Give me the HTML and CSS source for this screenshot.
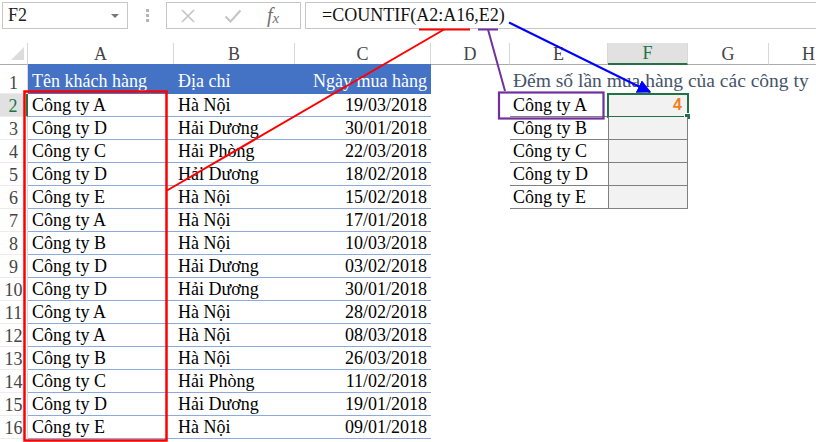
FILE: index.html
```html
<!DOCTYPE html>
<html lang="vi">
<head>
    <meta charset="UTF-8">
    <title>COUNTIF</title>
    <link rel="stylesheet" href="styles.css">
</head>
<body>
    <div class="formula-bar">
        <div class="name-box">F2<span class="caret"></span></div>
        <div class="grip"><span></span><span></span><span></span></div>
        <div class="fn-buttons">
            <svg class="btn-x" width="16" height="16" viewBox="0 0 16 16"><path d="M2 2L14 14M14 2L2 14" stroke="#c4c4c4" stroke-width="1.6" fill="none"/></svg>
            <svg class="btn-ok" width="18" height="16" viewBox="0 0 18 16"><path d="M1.5 8.5L6.5 13.5L16.5 2.5" stroke="#c4c4c4" stroke-width="2" fill="none"/></svg>
            <span class="fx">f<span>x</span></span>
        </div>
        <div class="formula">=COUNTIF(A2:A16,E2)</div>
    </div>

    <div class="sheet">
        <div class="row col-head">
            <div class="corner"><span class="tri"></span></div>
            <div>A</div><div>B</div><div>C</div><div>D</div><div>E</div><div class="sel">F</div><div>G</div><div>H</div>
        </div>
        <div class="row r1">
            <div class="rh">1</div>
            <div class="th">Tên khách hàng</div>
            <div class="th">Địa chỉ</div>
            <div class="th num">Ngày mua hàng</div>
            <div class="note">Đếm số lần mua hàng của các công ty</div>
        </div>
        <div class="row">
            <div class="rh sel">2</div>
            <div class="td">Công ty A</div><div class="td">Hà Nội</div><div class="td num">19/03/2018</div>
            <div class="ec">Công ty A</div><div class="fc active"><b>4</b></div>
        </div>
        <div class="row">
            <div class="rh">3</div>
            <div class="td">Công ty D</div><div class="td">Hải Dương</div><div class="td num">30/01/2018</div>
            <div class="ec">Công ty B</div><div class="fc"></div>
        </div>
        <div class="row">
            <div class="rh">4</div>
            <div class="td">Công ty C</div><div class="td">Hải Phòng</div><div class="td num">22/03/2018</div>
            <div class="ec">Công ty C</div><div class="fc"></div>
        </div>
        <div class="row">
            <div class="rh">5</div>
            <div class="td">Công ty D</div><div class="td">Hải Dương</div><div class="td num">18/02/2018</div>
            <div class="ec">Công ty D</div><div class="fc"></div>
        </div>
        <div class="row">
            <div class="rh">6</div>
            <div class="td">Công ty E</div><div class="td">Hà Nội</div><div class="td num">15/02/2018</div>
            <div class="ec">Công ty E</div><div class="fc"></div>
        </div>
        <div class="row">
            <div class="rh">7</div>
            <div class="td">Công ty A</div><div class="td">Hà Nội</div><div class="td num">17/01/2018</div>
        </div>
        <div class="row">
            <div class="rh">8</div>
            <div class="td">Công ty B</div><div class="td">Hà Nội</div><div class="td num">10/03/2018</div>
        </div>
        <div class="row">
            <div class="rh">9</div>
            <div class="td">Công ty D</div><div class="td">Hải Dương</div><div class="td num">03/02/2018</div>
        </div>
        <div class="row">
            <div class="rh">10</div>
            <div class="td">Công ty D</div><div class="td">Hải Dương</div><div class="td num">30/01/2018</div>
        </div>
        <div class="row">
            <div class="rh">11</div>
            <div class="td">Công ty A</div><div class="td">Hà Nội</div><div class="td num">28/02/2018</div>
        </div>
        <div class="row">
            <div class="rh">12</div>
            <div class="td">Công ty A</div><div class="td">Hà Nội</div><div class="td num">08/03/2018</div>
        </div>
        <div class="row">
            <div class="rh">13</div>
            <div class="td">Công ty B</div><div class="td">Hà Nội</div><div class="td num">26/03/2018</div>
        </div>
        <div class="row">
            <div class="rh">14</div>
            <div class="td">Công ty C</div><div class="td">Hải Phòng</div><div class="td num">11/02/2018</div>
        </div>
        <div class="row">
            <div class="rh">15</div>
            <div class="td">Công ty D</div><div class="td">Hải Dương</div><div class="td num">19/01/2018</div>
        </div>
        <div class="row">
            <div class="rh">16</div>
            <div class="td">Công ty E</div><div class="td">Hà Nội</div><div class="td num">09/01/2018</div>
        </div>
    </div>

    <!-- annotations drawn over the sheet -->
    <svg class="marks" width="816" height="442" viewBox="0 0 816 442">
        <defs>
            <marker id="arrow" viewBox="0 0 10 10" refX="9" refY="5" markerWidth="7" markerHeight="7" orient="auto">
                <path d="M0 0L10 5L0 10z" fill="#0000ff"/>
            </marker>
        </defs>
        <line x1="419" y1="29.5" x2="470" y2="29.5" stroke="#ff0000" stroke-width="2"/>
        <line x1="444" y1="29.5" x2="167" y2="190.5" stroke="#ff0000" stroke-width="2"/>
        <rect x="24.5" y="91.5" width="142" height="349" fill="none" stroke="#ff0000" stroke-width="2.5"/>
        <line x1="478" y1="29.5" x2="498" y2="29.5" stroke="#7030a0" stroke-width="2"/>
        <line x1="488" y1="29.5" x2="505" y2="91" stroke="#7030a0" stroke-width="2"/>
        <rect x="499" y="92.5" width="104.5" height="26" fill="none" stroke="#7030a0" stroke-width="2.2"/>
        <line x1="509" y1="22.5" x2="650" y2="92" stroke="#0000ff" stroke-width="2" marker-end="url(#arrow)"/>
    </svg>
</body>
</html>
```

FILE: styles.css
```css
body {
    margin: 0;
    width: 816px;
    height: 442px;
    overflow: hidden;
    position: relative;
    background-color: #fff;
    font-family: 'Liberation Serif', 'Times New Roman', serif;
    font-size: 18px;
    color: #000;
}
.formula-bar {
    display: flex;
    align-items: flex-start;
    height: 43px;
    padding: 2px 0 0 2px;
    box-sizing: border-box;
}
.name-box {
    position: relative;
    width: 126px;
    height: 27px;
    box-sizing: border-box;
    border: 1px solid #c6c6c6;
    padding-left: 5px;
    line-height: 25px;
    font-size: 18px;
    color: #222;
}
.caret {
    position: absolute;
    right: 8px;
    top: 11px;
    border-left: 4px solid transparent;
    border-right: 4px solid transparent;
    border-top: 4px solid #777;
}
.grip {
    width: 38px;
    height: 27px;
    display: flex;
    flex-direction: column;
    align-items: center;
    justify-content: center;
    gap: 2px;
}
.grip span {
    width: 3px;
    height: 3px;
    background-color: #b4b4b4;
}
.fn-buttons {
    width: 135px;
    height: 27px;
    box-sizing: border-box;
    border: 1px solid #c6c6c6;
    display: flex;
    align-items: center;
    padding-left: 13px;
}
.btn-x {
    margin-right: 28px;
}
.btn-ok {
    margin-right: 25px;
}
.fx {
    font-style: italic;
    font-size: 20px;
    color: #707070;
    line-height: 20px;
}
.fx span {
    font-size: 15px;
    position: relative;
    top: 1px;
}
.formula {
    flex: 1;
    height: 27px;
    margin-left: 4px;
    margin-right: -4px;
    box-sizing: border-box;
    border: 1px solid #c6c6c6;
    padding-left: 16px;
    line-height: 25px;
    color: #111;
}
.row {
    display: grid;
    grid-template-columns: 28px 146px 121px 136px 79px 98px 80px 81px 80px;
    height: 23px;
}
.row > div {
    box-sizing: border-box;
    white-space: nowrap;
    line-height: 20px;
    display: flex;
    align-items: flex-end;
}
.col-head {
    height: 21px;
}
.col-head > div {
    justify-content: center;
    align-items: center;
    color: #444;
    border-right: 1px solid #d8d8d8;
    border-bottom: 1px solid #ababab;
}
.col-head > div.sel {
    background-color: #e1e1e1;
    color: #217346;
    border-bottom: 2px solid #217346;
}
.corner {
    position: relative;
}
.tri {
    position: absolute;
    right: 3px;
    bottom: 4px;
    border-left: 13px solid transparent;
    border-bottom: 13px solid #dcdcdc;
}
.r1 {
    height: 30px;
}
.rh {
    justify-content: center;
    color: #444;
    border-right: 1px solid #d8d8d8;
    border-bottom: 1px solid #ececec;
}
.rh.sel {
    background-color: #e1e1e1;
    color: #217346;
    border-right: 2px solid #217346;
}
.td {
    padding: 0 4px 1px 4px;
    border-bottom: 1px solid #8ea9db;
}
.th {
    padding: 0 4px 3px 4px;
    background-color: #4472c4;
    color: #fff;
}
.num {
    justify-content: flex-end;
}
.note {
    grid-column: 6 / -1;
    padding: 0 0 3px 3px;
    font-size: 19.5px;
    color: #44546a;
}
.ec {
    grid-column: 6;
    padding: 0 3px 1px 3px;
    border-bottom: 1px solid #808080;
}
.fc {
    grid-column: 7;
    position: relative;
    justify-content: flex-end;
    padding: 0 5px 1px 0;
    background-color: #f2f2f2;
    border: 1px solid #808080;
    border-top: none;
}
.fc b {
    color: #f07f1e;
    font-family: 'Liberation Sans', Arial, sans-serif;
    font-size: 16px;
}
.fc.active::before {
    content: '';
    position: absolute;
    left: -2px;
    top: -1px;
    right: -2px;
    bottom: -2px;
    border: 2px solid #217346;
}
.fc.active::after {
    content: '';
    position: absolute;
    right: -4px;
    bottom: -4px;
    width: 5px;
    height: 5px;
    background-color: #217346;
    border: 1px solid #fff;
}
.marks {
    position: absolute;
    left: 0;
    top: 0;
    pointer-events: none;
}
```
